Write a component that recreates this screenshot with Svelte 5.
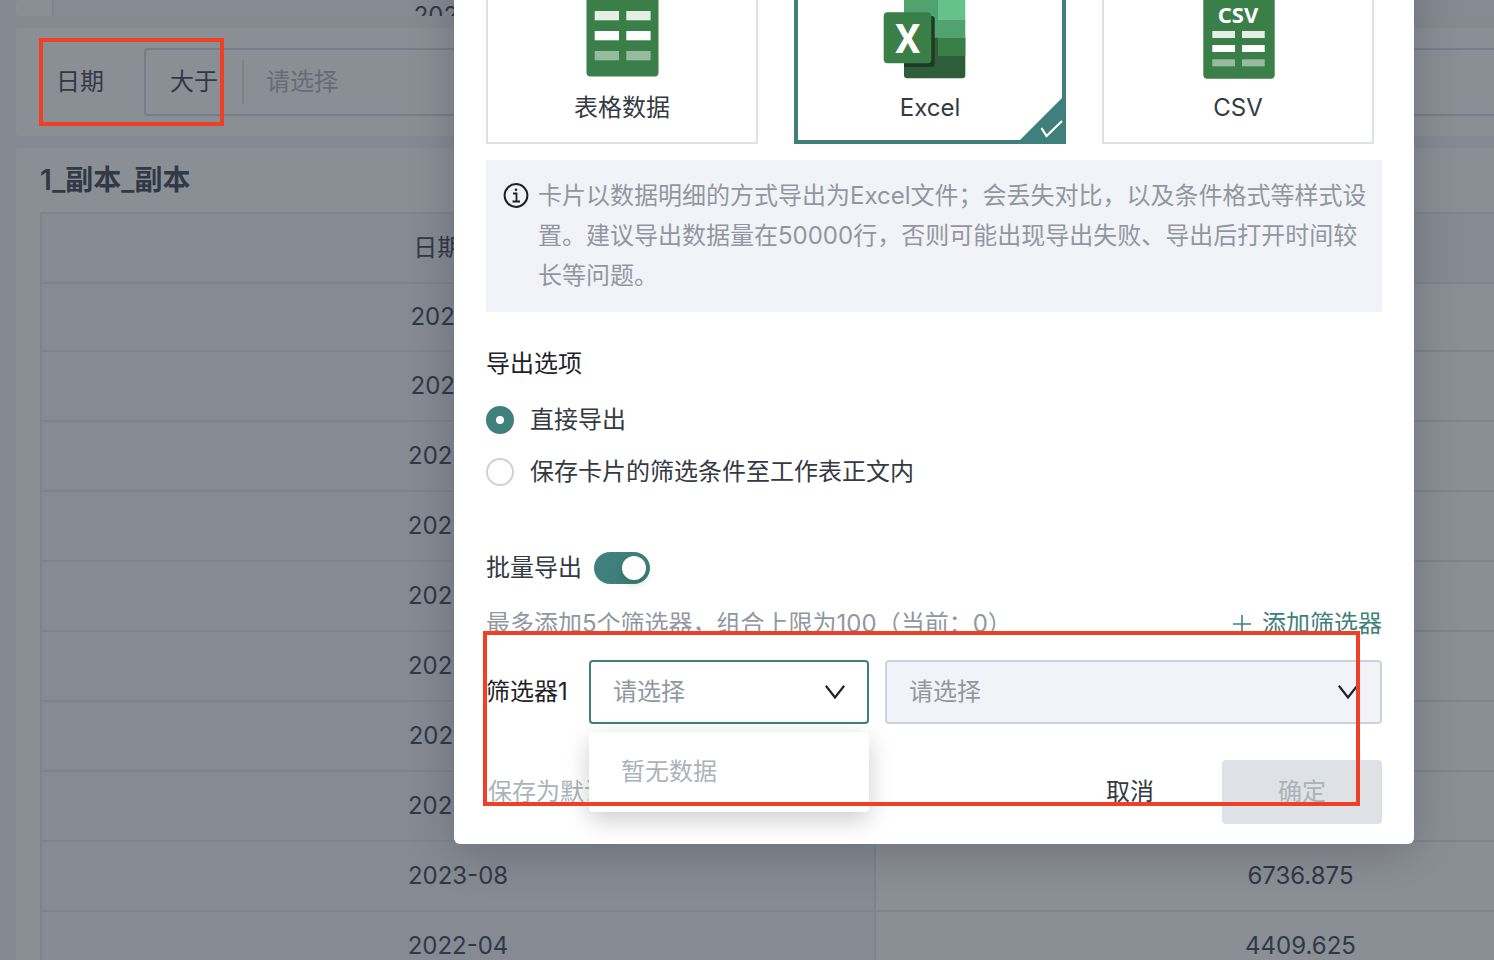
<script>
  const rows = [
    { month: "2023-01", value: "7215.500" },
    { month: "2022-10", value: "5308.125" },
    { month: "2023-05", value: "6120.750" },
    { month: "2023-06", value: "5874.250" },
    { month: "2023-02", value: "4986.375" },
    { month: "2022-09", value: "6450.125" },
    { month: "2023-07", value: "5013.500" },
    { month: "2023-03", value: "7092.250" },
    { month: "2023-08", value: "6736.875" },
    { month: "2022-04", value: "4409.625" },
  ];

  const formats = [
    { id: "table", label: "表格数据" },
    { id: "excel", label: "Excel" },
    { id: "csv", label: "CSV" },
  ];

  const exportModes = [
    { id: "direct", label: "直接导出" },
    { id: "withFilter", label: "保存卡片的筛选条件至工作表正文内" },
  ];

  let format = $state("excel");
  let mode = $state("direct");
  let batch = $state(true);
</script>

{#snippet bars(xs, ys, width, height)}
  {#each ys as y, i}
    {#each xs as x}
      <rect {x} {y} {width} {height} fill="#fff" fill-opacity={[0.87, 1, 0.47][i]} />
    {/each}
  {/each}
{/snippet}

{#snippet chevron()}
  <svg class="chevron" width="20" height="14" viewBox="0 0 20 14" fill="none" stroke="#1f2329" stroke-width="2.2">
    <path d="M.8 .8L10 12.500 19.200 .8" />
  </svg>
{/snippet}

<div class="page">
  <main class="dashboard">
    <section class="card card-top">
      <div class="top-cell">2022-08</div>
    </section>

    <section class="card filter-card">
      <label class="filter-label" for="date-op">日期</label>
      <div class="filter-box">
        <select id="date-op" class="filter-op">
          <option>大于</option>
        </select>
        <input class="filter-value" placeholder="请选择" aria-label="日期值" />
      </div>
    </section>

    <section class="card table-card">
      <h2>1_副本_副本</h2>
      <table>
        <thead>
          <tr><th>日期(月)</th><th></th></tr>
        </thead>
        <tbody>
          {#each rows as row}
            <tr><td>{row.month}</td><td>{row.value}</td></tr>
          {/each}
        </tbody>
      </table>
    </section>
  </main>

  <div class="mask">
    <div class="modal" role="dialog" aria-modal="true" aria-label="导出">
      <div class="formats">
        {#each formats as item}
          <label class="format" class:selected={format === item.id}>
            <input type="radio" name="format" value={item.id} bind:group={format} />
            <svg width="96" height="96" viewBox="0 0 96 96">
              {#if item.id === "table"}
                <rect x="12.5" y="2" width="72" height="90.5" rx="4" fill="#3a7f48" />
                {@render bars([20.7, 52.3], [27, 47, 67], 24.3, 9.3)}
              {:else if item.id === "excel"}
                <path d="M22 5a3 3 0 0 1 3-3h31v52H22z" fill="#50a36e" />
                <path d="M56 2h24.300a3 3 0 0 1 3 3v30.300H56z" fill="#64c389" />
                <path d="M56 35.300h27.300v18.400H56z" fill="#50a36e" />
                <path d="M22 53.700h61.300v37.600a3 3 0 0 1-3 3H25a3 3 0 0 1-3-3z" fill="#2f5c39" />
                <path d="M56 53.700h27.300V72H56z" fill="#3a7f48" />
                <path d="M22 32h27.700a3 3 0 0 1 3 3v45a3 3 0 0 1-3 3H22z" fill="#1d3a26" />
                <rect x="1.700" y="28.300" width="47.600" height="51" rx="4" fill="#3a7f48" />
                <text class="logo-x" x="25.700" y="68.700" text-anchor="middle">X</text>
              {:else}
                <rect x="13.300" y="2" width="71.400" height="92.700" rx="4" fill="#3a7f48" />
                <text class="logo-csv" x="48" y="39.300" text-anchor="middle">CSV</text>
                {@render bars([22.3, 52], [47, 61, 75.3], 22.7, 7)}
              {/if}
            </svg>
            <span>{item.label}</span>
            {#if format === item.id}
              <svg class="corner" width="50" height="50" viewBox="0 0 50 50">
                <path d="M50 0v50H0z" fill="#3f807c" />
                <path d="M25.500 34l5 8L46 27" fill="none" stroke="#fff" stroke-width="2.200" />
              </svg>
            {/if}
          </label>
        {/each}
      </div>

      <div class="notice">
        <svg width="28" height="40" viewBox="0 0 28 40" fill="none" stroke="#1f2329" stroke-width="2">
          <circle cx="14" cy="19.500" r="11.400" />
          <path d="M11 17.500h3.500v8M10.500 25.500H18" stroke-width="1.800" />
          <circle cx="14" cy="13.700" r="1.300" fill="#1f2329" stroke="none" />
        </svg>
        <p>卡片以数据明细的方式导出为Excel文件；会丢失对比，以及条件格式等样式设置。建议导出数据量在50000行，否则可能出现导出失败、导出后打开时间较长等问题。</p>
      </div>

      <h3>导出选项</h3>
      <div class="modes">
        {#each exportModes as item}
          <label class="mode">
            <input type="radio" name="mode" value={item.id} bind:group={mode} />
            {item.label}
          </label>
        {/each}
      </div>

      <label class="batch">
        批量导出
        <input type="checkbox" role="switch" bind:checked={batch} />
      </label>

      <div class="hint">
        <span>最多添加5个筛选器，组合上限为100（当前：0）</span>
        <button class="add">
          <svg width="20" height="20" viewBox="0 0 20 20" stroke="currentColor" stroke-width="1.600">
            <path d="M1 10h18M10 1v18" />
          </svg>
          添加筛选器
        </button>
      </div>

      <div class="filter-row">
        <label for="filter-field">筛选器1</label>
        <div class="select open">
          <select id="filter-field">
            <option>请选择</option>
          </select>
          {@render chevron()}
          <div class="menu">暂无数据</div>
        </div>
        <div class="select disabled">
          <select aria-label="筛选器1的值" disabled>
            <option>请选择</option>
          </select>
          {@render chevron()}
        </div>
      </div>

      <footer>
        <button class="save-default" disabled>保存为默认</button>
        <button class="cancel">取消</button>
        <button class="confirm" disabled>确定</button>
      </footer>
    </div>
  </div>

  <div class="mark mark-date"></div>
  <div class="mark mark-filter"></div>
</div>

<style>
  :global(body) {
    margin: 0;
  }

  .page {
    position: relative;
    height: 100vh;
    overflow: hidden;
    background: #f3f5f9;
    font-family: Inter, "Noto Sans CJK SC", sans-serif;
    font-size: 24px;
    line-height: 40px;
  }

  .page * {
    box-sizing: border-box;
  }

  button,
  input,
  select {
    margin: 0;
    padding: 0;
    border: none;
    background: none;
    color: inherit;
    font: inherit;
    appearance: none;
  }

  .dashboard {
    display: flex;
    flex-direction: column;
    gap: 12px;
    width: 118%;
    padding: 0 12px 0 16px;
    color: #4c5462;
  }

  .card {
    background: #fff;
    border-radius: 4px;
  }

  .card-top {
    height: 16px;
    padding-left: 36px;
    overflow: hidden;
  }

  .top-cell {
    border-left: 2px solid #e6e9f0;
    background: #f5f6fb;
    padding-right: calc(50% + 28px);
    line-height: 32px;
    text-align: center;
  }

  .filter-card {
    display: flex;
    align-items: center;
    padding: 20px 24px 20px 40px;
  }

  .filter-label {
    width: 88px;
  }

  .filter-box {
    display: flex;
    align-items: center;
    flex: 1;
    height: 68px;
    border: 2px solid #dadfe6;
    border-radius: 4px;
  }

  .filter-op {
    width: 98px;
    height: 44px;
    padding-left: 24px;
    border-right: 2px solid #e3e6ec;
  }

  .filter-value {
    flex: 1;
    padding-left: 22px;
  }

  .filter-value::placeholder {
    color: #b4bac3;
    opacity: 1;
  }

  .table-card {
    padding: 12px 24px;
  }

  h2 {
    margin: 0 0 12px;
    font-size: 28px;
    font-weight: 600;
    line-height: 40px;
  }

  table {
    width: 100%;
    table-layout: fixed;
    border-collapse: separate;
    border-spacing: 0;
    border-top: 2px solid #e6e9f0;
    border-left: 2px solid #e6e9f0;
  }

  th,
  td {
    height: 70px;
    padding: 0;
    border-right: 2px solid #e6e9f0;
    border-bottom: 2px solid #e6e9f0;
    font-weight: 400;
    text-align: center;
  }

  th:first-child {
    width: 49.5%;
  }

  th,
  td:first-child {
    background: #f5f6fb;
  }

  tbody tr:first-child td {
    height: 68px;
  }

  .mask {
    position: absolute;
    inset: 0;
    display: flex;
    align-items: flex-end;
    justify-content: center;
    padding: 0 0 116px 374px;
    background: rgba(22, 30, 44, 0.5);
  }

  .modal {
    width: 960px;
    padding: 32px 32px 20px;
    background: #fff;
    border-radius: 6px;
    box-shadow: 0 8px 48px rgba(0, 0, 0, 0.2);
    color: #343a42;
  }

  .formats {
    display: flex;
    gap: 36px;
  }

  .format {
    position: relative;
    display: flex;
    flex-direction: column;
    align-items: center;
    gap: 12px;
    width: 272px;
    padding: 18px;
    border: 2px solid #dee1e6;
    line-height: 32px;
    cursor: pointer;
  }

  .format.selected {
    padding: 16px;
    border: 4px solid #3f807c;
  }

  .format input {
    position: absolute;
    opacity: 0;
  }

  .corner {
    position: absolute;
    right: -4px;
    bottom: -4px;
  }

  .logo-x {
    fill: #fff;
    font: 700 40px Roboto, sans-serif;
  }

  .logo-csv {
    fill: #fff;
    font: 700 22px "Noto Sans", sans-serif;
  }

  .notice {
    display: flex;
    gap: 8px;
    margin-top: 16px;
    padding: 16px 12px 16px 16px;
    background: #f2f3f8;
    color: #92979f;
  }

  .notice svg {
    flex-shrink: 0;
  }

  p {
    margin: 0;
  }

  h3 {
    margin: 32px 0 16px;
    color: #1f2329;
    font-size: 24px;
    font-weight: 400;
  }

  .modes {
    display: flex;
    flex-direction: column;
    gap: 12px;
  }

  .mode {
    display: flex;
    align-items: center;
    gap: 16px;
  }

  .mode input {
    width: 28px;
    height: 28px;
    border: 2px solid #ced3da;
    border-radius: 50%;
  }

  .mode input:checked {
    border: 10px solid #3f807c;
  }

  .batch {
    display: flex;
    align-items: center;
    gap: 12px;
    margin-top: 60px;
    line-height: 32px;
  }

  .batch input {
    display: flex;
    width: 56px;
    height: 32px;
    padding: 4px;
    border-radius: 16px;
    background: #ced3da;
  }

  .batch input::before {
    content: "";
    width: 24px;
    height: 24px;
    border-radius: 50%;
    background: #fff;
    box-shadow: 0 4px 8px rgba(0, 35, 11, 0.2);
  }

  .batch input:checked {
    justify-content: flex-end;
    background: #3f807c;
  }

  .hint {
    display: flex;
    justify-content: space-between;
    margin-top: 20px;
    color: #92979f;
  }

  .add {
    display: flex;
    align-items: center;
    gap: 10px;
    color: #3f807c;
    cursor: pointer;
  }

  .filter-row {
    display: grid;
    grid-template-columns: 87px 280px 1fr;
    align-items: center;
    gap: 16px;
    margin-top: 16px;
    color: #1f2329;
    white-space: nowrap;
  }

  .select {
    position: relative;
    display: grid;
    align-items: center;
  }

  .select select {
    grid-area: 1 / 1;
    height: 64px;
    padding: 0 56px 0 22px;
    border: 2px solid #ced3da;
    border-radius: 4px;
    color: #92979f;
  }

  .select.open select {
    border-color: #3f807c;
  }

  .select.disabled select {
    background: #f2f3f8;
    opacity: 1;
  }

  .chevron {
    grid-area: 1 / 1;
    justify-self: end;
    margin-right: 24px;
    pointer-events: none;
  }

  .menu {
    position: absolute;
    top: 72px;
    left: 0;
    width: 100%;
    padding: 20px 32px;
    border-radius: 4px;
    background: #fff;
    box-shadow: 0 8px 24px rgba(0, 0, 0, 0.2);
    color: #acb2b9;
  }

  footer {
    display: flex;
    gap: 12px;
    margin-top: 36px;
  }

  footer button {
    width: 160px;
    height: 64px;
    border-radius: 4px;
  }

  footer .save-default {
    width: auto;
    margin-right: auto;
    padding: 0 2px;
    color: #acb2b9;
  }

  .confirm {
    background: #dee1e5;
    color: #acb2b9;
  }

  .mark {
    position: absolute;
    border: 4px solid #ee4026;
    pointer-events: none;
  }

  .mark-date {
    top: 38px;
    left: 39px;
    width: 185px;
    height: 88px;
  }

  .mark-filter {
    top: 631px;
    left: 483px;
    width: 877px;
    height: 175px;
  }
</style>
